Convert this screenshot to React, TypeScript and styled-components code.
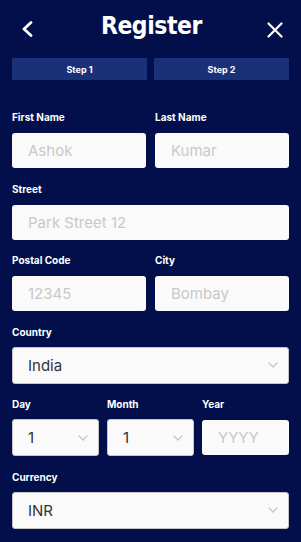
import React from "react";
import styled, { createGlobalStyle } from "styled-components";

const GlobalStyle = createGlobalStyle`
    html, body {
        margin: 0;
        padding: 0;
        background: #020f4a;
    }
    * {
        box-sizing: border-box;
    }
`;

const Chevron = () => (
    <svg width="12" height="16" viewBox="0 0 12 16" fill="none">
        <path d="M10 1.5 L3 8 L10 14.5" stroke="#fff" strokeWidth="2.8" strokeLinecap="round" strokeLinejoin="round" />
    </svg>
);

const Cross = () => (
    <svg width="16" height="16" viewBox="0 0 16 16" fill="none">
        <path d="M1.5 1.5 L14.5 14.5 M14.5 1.5 L1.5 14.5" stroke="#fff" strokeWidth="2.2" strokeLinecap="round" />
    </svg>
);

const Caret = () => (
    <svg width="10" height="6" viewBox="0 0 10 6" fill="none">
        <path d="M1 1 L5 5 L9 1" stroke="#c4c4c4" strokeWidth="1.2" strokeLinecap="round" strokeLinejoin="round" />
    </svg>
);

const TextField = ({ label, placeholder }) => (
    <Field>
        <Label>{label}</Label>
        <Input placeholder={placeholder} />
    </Field>
);

const SelectField = ({ label, value }) => (
    <Field>
        <Label>{label}</Label>
        <Select>
            <SelectValue>{value}</SelectValue>
            <Caret />
        </Select>
    </Field>
);

export default function App() {
    return (
        <>
            <GlobalStyle />
            <Page>
                <Header>
                    <IconButton>
                        <Chevron />
                    </IconButton>
                    <Title>Register</Title>
                    <IconButton $close>
                        <Cross />
                    </IconButton>
                </Header>
                <Steps>
                    <Step>Step 1</Step>
                    <Step>Step 2</Step>
                </Steps>
                <Form>
                    <Row $cols={2}>
                        <TextField label="First Name" placeholder="Ashok" />
                        <TextField label="Last Name" placeholder="Kumar" />
                    </Row>
                    <Row $cols={1}>
                        <TextField label="Street" placeholder="Park Street 12" />
                    </Row>
                    <Row $cols={2}>
                        <TextField label="Postal Code" placeholder="12345" />
                        <TextField label="City" placeholder="Bombay" />
                    </Row>
                    <Row $cols={1}>
                        <SelectField label="Country" value="India" />
                    </Row>
                    <Row $cols={3}>
                        <SelectField label="Day" value="1" />
                        <SelectField label="Month" value="1" />
                        <TextField label="Year" placeholder="YYYY" />
                    </Row>
                    <Row $cols={1}>
                        <SelectField label="Currency" value="INR" />
                    </Row>
                </Form>
            </Page>
        </>
    );
}

const Page = styled.div`
    width: 301px;
    min-height: 542px;
    background: #020f4a;
    padding: 0 12px;
    font-family: Inter, "Noto Sans", sans-serif;
`;

const Header = styled.div`
    height: 52px;
    display: flex;
    align-items: center;
    justify-content: space-between;
    padding: 2px 6px 0 7px;
`;

const IconButton = styled.div`
    width: 16px;
    height: 16px;
    display: flex;
    align-items: center;
    justify-content: center;
    margin-top: ${(p) => (p.$close ? "6px" : "3px")};
`;

const Title = styled.h1`
    margin: 0 0 4px 0;
    color: #fff;
    font-family: "DejaVu Sans", sans-serif;
    font-weight: 700;
    font-size: 25px;
    letter-spacing: -0.5px;
    transform: scaleX(0.88);
`;

const Steps = styled.div`
    display: grid;
    grid-template-columns: 1fr 1fr;
    gap: 7px;
    margin-top: 6px;
`;

const Step = styled.div`
    height: 22px;
    background: #1a3078;
    color: #fff;
    font-size: 9px;
    font-weight: 700;
    display: flex;
    align-items: center;
    justify-content: center;
`;

const Form = styled.div`
    display: flex;
    flex-direction: column;
    gap: 14.5px;
    padding-top: 31px;
`;

const Row = styled.div`
    display: grid;
    grid-template-columns: repeat(${(p) => p.$cols}, 1fr);
    gap: ${(p) => (p.$cols === 3 ? "8px" : "9px")};
`;

const Field = styled.div`
    display: flex;
    flex-direction: column;
    gap: 10px;
`;

const Label = styled.label`
    color: #fff;
    font-size: 10px;
    font-weight: 700;
    line-height: 12px;
`;

const Input = styled.input`
    height: 35px;
    width: 100%;
    border: none;
    border-radius: 3px;
    background: #fafafa;
    padding: 0 16px;
    font-family: Inter, "Noto Sans", sans-serif;
    font-size: 15px;
    color: #333;
    outline: none;

    &::placeholder {
        color: #c9c9c9;
    }
`;

const Select = styled.div`
    height: 37px;
    border: 1px solid #c6c6c6;
    border-radius: 3px;
    background: #fafafa;
    display: flex;
    align-items: center;
    justify-content: space-between;
    padding: 0 10px 0 15px;
    margin-top: -1px;
`;

const SelectValue = styled.span`
    font-size: 15px;
    color: #333;
`;
